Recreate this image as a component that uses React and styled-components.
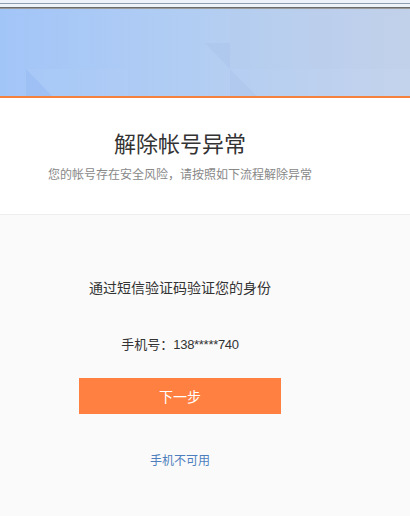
import React from "react";
import styled, { createGlobalStyle } from "styled-components";

const GlobalStyle = createGlobalStyle`
  html, body {
    margin: 0;
    padding: 0;
    background: #fafafa;
  }
  body {
    font-family: "Noto Sans CJK SC", "Liberation Sans", sans-serif;
    color: #333;
  }
`;

const Page = styled.div`
  width: 410px;
  height: 516px;
  overflow: hidden;
  background: #fafafa;
`;

const Chrome = styled.div`
  height: 9px;
  background: #eef3f9;
  box-sizing: border-box;
  position: relative;
  &::before {
    content: "";
    position: absolute;
    left: 0;
    right: 0;
    top: 3px;
    height: 1px;
    background: #8e9cb0;
  }
  &::after {
    content: "";
    position: absolute;
    left: 0;
    right: 0;
    bottom: 0;
    height: 2px;
    background: linear-gradient(#6b6b6b 50%, #9a9a9a 50%);
  }
`;

const Banner = styled.div`
  position: relative;
  height: 87px;
  background: linear-gradient(90deg, #a2c5f8 0%, #b1cdf3 45%, #c4d3ec 100%);
  border-bottom: 2px solid #f5813c;
  overflow: hidden;
`;

const BannerArt = styled.svg`
  position: absolute;
  inset: 0;
`;

const Head = styled.section`
  background: #fff;
  border-bottom: 1px solid #eeeeee;
  height: 116px;
`;

const Column = styled.div`
  width: 360px;
  display: flex;
  flex-direction: column;
  align-items: center;
`;

const Title = styled.h1`
  margin: 0;
  padding-top: 31px;
  font-size: 22px;
  font-weight: 400;
  line-height: 26px;
  color: #333;
`;

const Subtitle = styled.p`
  margin: 0;
  padding-top: 10px;
  font-size: 12px;
  line-height: 18px;
  color: #888;
`;

const Body = styled.section`
  padding-top: 62px;
`;

const Lead = styled.p`
  margin: 0;
  font-size: 14px;
  line-height: 20px;
  color: #333;
`;

const Phone = styled.p`
  margin: 38px 0 0;
  font-size: 13px;
  line-height: 18px;
  color: #333;
`;

const Digits = styled.span`
  font-family: "Liberation Sans", sans-serif;
  letter-spacing: -0.3px;
`;

const NextButton = styled.button`
  margin-top: 24px;
  width: 202px;
  height: 36px;
  border: none;
  background: #ff8040;
  color: #fff;
  font-family: inherit;
  font-size: 14px;
  cursor: pointer;
`;

const Link = styled.a`
  margin-top: 37px;
  font-size: 12px;
  line-height: 18px;
  color: #4d7fbd;
  text-decoration: none;
`;

export default function App() {
  return (
    <Page>
      <GlobalStyle />
      <Chrome />
      <Banner>
        <BannerArt width="410" height="87" viewBox="0 0 410 87">
          <rect x="26" y="60" width="102" height="27" fill="#b8d2f8" opacity="0.18" />
          <polygon points="26,60 52,87 26,87" fill="#8fb3f0" opacity="0.4" />
          <polygon points="205,34 230,60 230,34" fill="#a4bbe4" opacity="0.3" />
          <polygon points="230,60 257,87 230,87" fill="#a6bde6" opacity="0.3" />
          <rect x="230" y="0" width="180" height="60" fill="#b4c6e6" opacity="0.15" />
        </BannerArt>
      </Banner>
      <Head>
        <Column>
          <Title>解除帐号异常</Title>
          <Subtitle>您的帐号存在安全风险，请按照如下流程解除异常</Subtitle>
        </Column>
      </Head>
      <Body>
        <Column>
          <Lead>通过短信验证码验证您的身份</Lead>
          <Phone>
            手机号：<Digits>138*****740</Digits>
          </Phone>
          <NextButton>下一步</NextButton>
          <Link href="#">手机不可用</Link>
        </Column>
      </Body>
    </Page>
  );
}
